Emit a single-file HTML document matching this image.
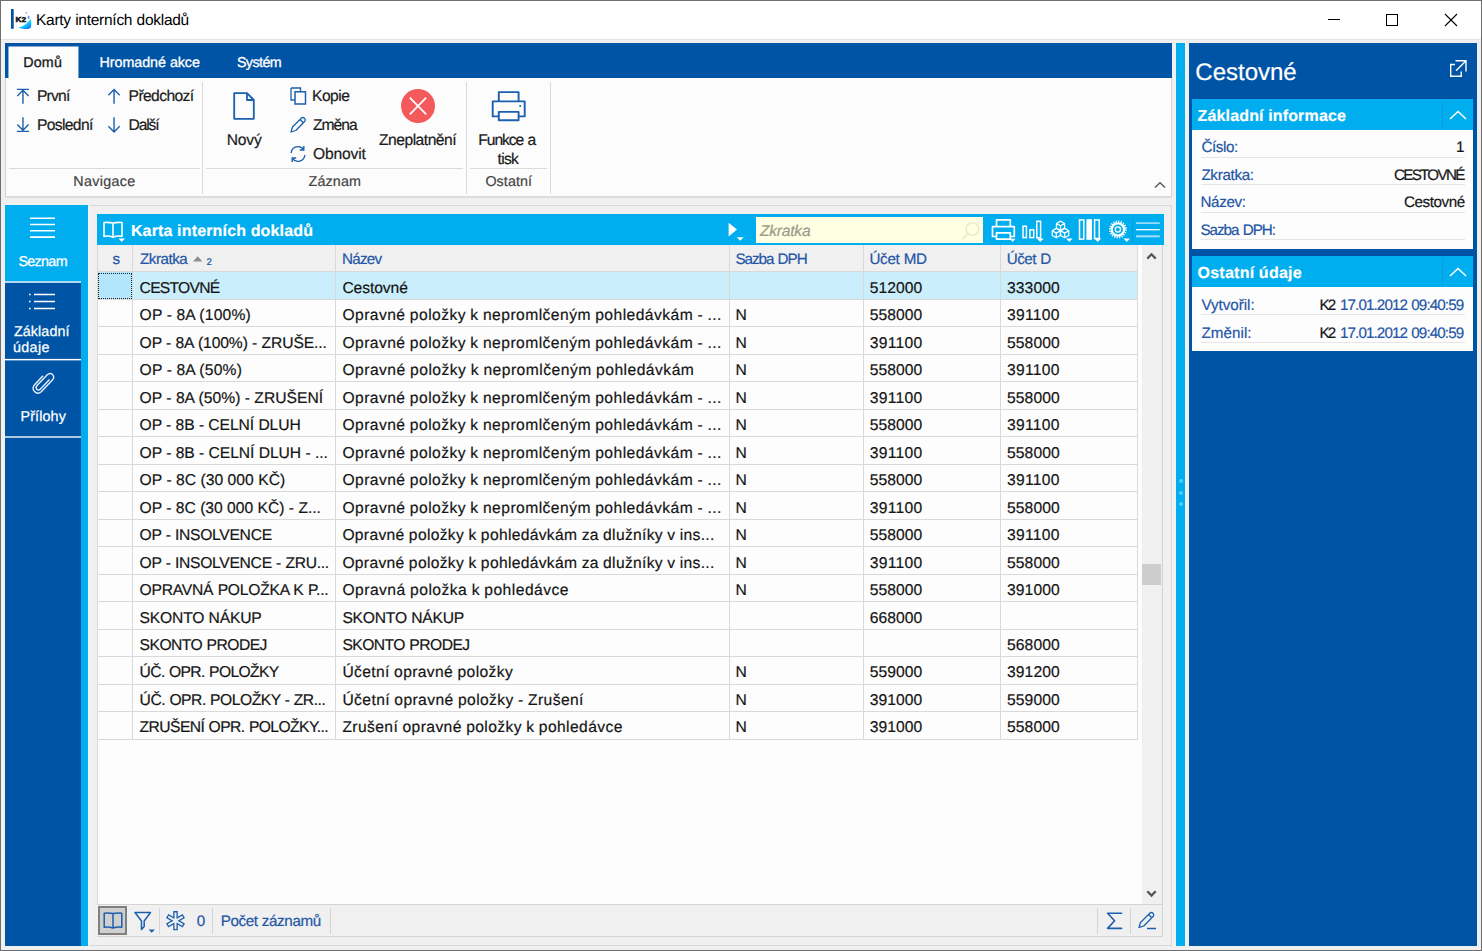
<!DOCTYPE html>
<html lang="cs">
<head>
<meta charset="utf-8">
<title>Karty interních dokladů</title>
<style>
html,body{margin:0;padding:0;}
body{width:1482px;height:951px;overflow:hidden;background:#f0f0f0;font-family:"Liberation Sans", sans-serif;position:relative;}
#app{position:absolute;left:0;top:0;width:1482px;height:951px;overflow:hidden;background:#f0f0f0;}
#app div,#app span,#app svg{position:absolute;}
#app span{white-space:pre;line-height:1;text-rendering:geometricPrecision;-webkit-text-stroke:0.2px;}
#app svg{overflow:visible;}
</style>
</head>
<body>
<div id="app">
<div style="left:0px;top:0px;width:1482px;height:951px;background:#f0f0f0;"></div>
<div style="left:1px;top:1px;width:1480px;height:38px;background:#ffffff;"></div>
<div style="left:1px;top:39px;width:1480px;height:1px;background:#e4e4e4;"></div>
<div style="left:0px;top:0px;width:1482px;height:1px;background:#6f6f6f;"></div>
<div style="left:0px;top:0px;width:1px;height:951px;background:#6f6f6f;"></div>
<div style="left:1481px;top:0px;width:1px;height:951px;background:#6f6f6f;"></div>
<div style="left:0px;top:950px;width:1482px;height:1px;background:#6f6f6f;"></div>
<header id="titlebar">
<svg style="left:11px;top:9px;" width="21" height="20" viewBox="0 0 21 20"><defs><linearGradient id="k2g" x1="0.15" y1="0.2" x2="0.85" y2="1"><stop offset="0" stop-color="#4ff5d2"/><stop offset="0.45" stop-color="#18d8fa"/><stop offset="1" stop-color="#0a6cff"/></linearGradient></defs>
<rect x="0" y="0" width="2.7" height="19.8" fill="#0054a6"/>
<path d="M7.4 18.6 Q12 17.6 14.5 15.2 Q17.6 12.4 19.4 10.2 Q20.4 10.6 20.2 16.6 Q20 19.9 17 19.9 H13 Q10 20 7.4 18.6 Z" fill="url(#k2g)"/>
<ellipse cx="17.7" cy="8.2" rx="0.9" ry="1.7" fill="#5b94ff"/>
<circle cx="15.4" cy="3.9" r="0.8" fill="#7aa8ff"/>
<circle cx="5.3" cy="17" r="0.6" fill="#b9d4ff"/>
<text x="4.6" y="12.6" font-family="Liberation Sans, sans-serif" font-size="7.6" font-weight="700" fill="#111" stroke="#111" stroke-width="0.5" textLength="10.6" lengthAdjust="spacingAndGlyphs">K2</text></svg>
<span style="top:13px;font-size:15.5px;color:#000;letter-spacing:-0.265px;word-spacing:0.265px;left:36.00px;-webkit-text-stroke:0;">Karty interních dokladů</span>
<svg style="left:1328px;top:14px;" width="12" height="12" viewBox="0 0 12 12"><path d="M0 5.5 H12" stroke="#000" stroke-width="1" fill="none"/></svg>
<svg style="left:1386px;top:14px;" width="12" height="12" viewBox="0 0 12 12"><rect x="0.5" y="0.5" width="11" height="11" stroke="#000" stroke-width="1" fill="none"/></svg>
<svg style="left:1445px;top:14px;" width="12" height="12" viewBox="0 0 12 12"><path d="M0 0 L12 12 M12 0 L0 12" stroke="#000" stroke-width="1.1" fill="none"/></svg>
</header>
<nav id="ribbon">
<div style="left:5px;top:43px;width:1167px;height:35px;background:#0054a6;"></div>
<div style="left:5px;top:78px;width:1167px;height:119px;background:#fcfcfc;box-sizing:border-box;border:1px solid #d2d2d2;border-top:none;border-bottom-color:#dcdcdc;"></div>
<div style="left:5px;top:197px;width:1167px;height:1px;background:#dedede;"></div>
<svg style="left:8px;top:46px;" width="72" height="32" viewBox="0 0 72 32"><rect x="0.45" y="0.5" width="70" height="31.5" fill="#fcfcfc"/></svg>
<span style="top:56px;font-size:14.3px;color:#1a1a1a;letter-spacing:0.133px;left:23.30px;-webkit-text-stroke:0.3px #1a1a1a;">Domů</span>
<span style="top:56px;font-size:14.3px;color:#fff;letter-spacing:-0.055px;word-spacing:0.055px;left:99.60px;-webkit-text-stroke:0.3px #fff;">Hromadné akce</span>
<span style="top:56px;font-size:14.3px;color:#fff;letter-spacing:-0.58px;left:236.90px;-webkit-text-stroke:0.3px #fff;">Systém</span>
<div style="left:202px;top:82px;width:1px;height:112px;background:#dadada;"></div>
<div style="left:466px;top:82px;width:1px;height:112px;background:#dadada;"></div>
<div style="left:550px;top:82px;width:1px;height:112px;background:#dadada;"></div>
<div style="left:9px;top:168px;width:191px;height:1px;background:#dadada;"></div>
<div style="left:206px;top:168px;width:257px;height:1px;background:#dadada;"></div>
<div style="left:470px;top:168px;width:77px;height:1px;background:#dadada;"></div>
<span style="top:175px;font-size:14.3px;color:#444;letter-spacing:0.329px;left:73.30px;">Navigace</span>
<span style="top:175px;font-size:14.3px;color:#444;letter-spacing:0.14px;left:308.60px;">Záznam</span>
<span style="top:175px;font-size:14.3px;color:#444;letter-spacing:0.1px;left:485.40px;">Ostatní</span>
<svg style="left:16px;top:88px;" width="16" height="16" viewBox="0 0 16 16"><path d="M0.9 1.4 H13 M6.95 2 V15.7 M1.3 8 L6.95 2.3 L12.6 8" stroke="#1b5fae" stroke-width="1.4" fill="none"/></svg>
<svg style="left:16px;top:117px;" width="16" height="16" viewBox="0 0 16 16"><path d="M0.9 14.4 H13 M6.95 0.2 V13.6 M1.3 7.6 L6.95 13.3 L12.6 7.6" stroke="#1b5fae" stroke-width="1.4" fill="none"/></svg>
<svg style="left:107px;top:88px;" width="16" height="16" viewBox="0 0 16 16"><path d="M7.05 1.5 V15.7 M1.4 7.2 L7.05 1.5 L12.7 7.2" stroke="#1b5fae" stroke-width="1.4" fill="none"/></svg>
<svg style="left:107px;top:117px;" width="16" height="16" viewBox="0 0 16 16"><path d="M7.05 0.2 V15 M1.4 9.3 L7.05 15 L12.7 9.3" stroke="#1b5fae" stroke-width="1.4" fill="none"/></svg>
<span style="top:89px;font-size:15.65px;color:#1a1a1a;letter-spacing:-0.75px;left:36.90px;">První</span>
<span style="top:118px;font-size:15.65px;color:#1a1a1a;letter-spacing:-0.629px;left:36.90px;">Poslední</span>
<span style="top:89px;font-size:15.65px;color:#1a1a1a;letter-spacing:-0.613px;left:128.60px;">Předchozí</span>
<span style="top:118px;font-size:15.65px;color:#1a1a1a;letter-spacing:-1.15px;left:128.60px;">Další</span>
<svg style="left:233px;top:92px;" width="22" height="28" viewBox="0 0 22 28"><path d="M1.2 1.2 H14 L20.8 8 V26.8 H1.2 Z M14 1.2 V8 H20.8" stroke="#1b5fae" stroke-width="1.8" fill="none" stroke-linejoin="round"/></svg>
<span style="top:133px;font-size:15.65px;color:#1a1a1a;letter-spacing:-0.2px;left:226.70px;">Nový</span>
<svg style="left:290px;top:87px;" width="17" height="18" viewBox="0 0 17 18"><path d="M1 1 H10.5 V4.5 M1 1 V13 H4.5" stroke="#1b5fae" stroke-width="1.3" fill="none"/><rect x="5" y="4.8" width="10.5" height="12.2" stroke="#1b5fae" stroke-width="1.5" fill="none"/></svg>
<span style="top:89px;font-size:15.65px;color:#1a1a1a;letter-spacing:-0.525px;left:312.00px;">Kopie</span>
<svg style="left:289px;top:116px;" width="18" height="18" viewBox="0 0 18 18"><path d="M2 16 L3.5 11 L12.5 2 Q14 0.8 15.5 2.3 Q17 3.8 15.8 5.3 L6.8 14.5 Z M11 3.5 L14.3 6.8" stroke="#1b5fae" stroke-width="1.3" fill="none" stroke-linejoin="round"/></svg>
<span style="top:118px;font-size:15.65px;color:#1a1a1a;letter-spacing:-1.025px;left:313.00px;">Změna</span>
<svg style="left:289px;top:145px;" width="18" height="18" viewBox="0 0 18 18"><path d="M2.2 8 A6.8 6.8 0 0 1 14.5 4.5 M15.8 10 A6.8 6.8 0 0 1 3.5 13.5" stroke="#1b5fae" stroke-width="1.4" fill="none"/><path d="M14.8 1 V5 H10.8 M3.2 17 V13 H7.2" stroke="#1b5fae" stroke-width="1.4" fill="none"/></svg>
<span style="top:147px;font-size:15.65px;color:#1a1a1a;letter-spacing:-0.183px;left:313.00px;">Obnovit</span>
<svg style="left:401px;top:89px;" width="34" height="34" viewBox="0 0 34 34"><circle cx="17" cy="17" r="17" fill="#f4595c"/><path d="M8.8 8.6 L25.2 25.4 M25.2 8.6 L8.8 25.4" stroke="#fff" stroke-width="1.7" fill="none"/></svg>
<span style="top:133px;font-size:15.65px;color:#1a1a1a;letter-spacing:-0.5px;left:379.00px;">Zneplatnění</span>
<svg style="left:490.5px;top:91px;" width="36" height="31" viewBox="0 0 36 31"><path d="M7.8 10.2 V1.1 H27.6 V10.2 M7.8 25.4 H1.7 V10.4 H33.7 V25.4 H27.6 M7.8 20.9 H27.6 V29.2 H7.8 Z" stroke="#1b5fae" stroke-width="1.9" fill="none" stroke-linejoin="round"/><circle cx="29.2" cy="15" r="1" fill="#1b5fae"/></svg>
<span style="top:133px;font-size:15.65px;color:#1a1a1a;letter-spacing:-1.067px;word-spacing:1.067px;left:478.30px;">Funkce a</span>
<span style="top:152px;font-size:15.65px;color:#1a1a1a;letter-spacing:-0.7px;left:497.50px;">tisk</span>
<svg style="left:1154px;top:181px;" width="12" height="8" viewBox="0 0 12 8"><path d="M1 6.6 L6 1.8 L11 6.6" stroke="#5a5a5a" stroke-width="1.4" fill="none"/></svg>
</nav>
<nav id="sidebar">
<div style="left:5px;top:205px;width:83px;height:741px;background:#00adef;"></div>
<div style="left:5px;top:283px;width:76px;height:663px;background:#0054a6;"></div>
<div style="left:5px;top:281px;width:76px;height:2px;background:#b2d9f2;"></div>
<div style="left:5px;top:358px;width:76px;height:3px;background:linear-gradient(to bottom,#1f62ae 0,#1f62ae 33.3%,#ffffff 33.3%,#ffffff 66.6%,#5e92c9 66.6%);"></div>
<div style="left:5px;top:436px;width:76px;height:2px;background:#adc8e4;"></div>
<svg style="left:30px;top:217px;" width="25" height="22" viewBox="0 0 25 22"><path d="M0 1.3 H25 M0 7.5 H25 M0 13.7 H25 M0 20.1 H25" stroke="#fff" stroke-width="1.6" fill="none"/></svg>
<span style="top:255px;font-size:14.3px;color:#fff;letter-spacing:-0.66px;left:18.40px;-webkit-text-stroke:0.25px #fff;">Seznam</span>
<svg style="left:29px;top:293px;" width="26" height="18" viewBox="0 0 26 18"><path d="M5 1.5 H26 M5 8.5 H26 M5 15.5 H26" stroke="#fff" stroke-width="1.6" fill="none"/><path d="M0 1.5 H1.6 M0 8.5 H1.6 M0 15.5 H1.6" stroke="#fff" stroke-width="1.6" fill="none"/></svg>
<span style="top:325px;font-size:14.3px;color:#fff;letter-spacing:0.086px;left:14.00px;-webkit-text-stroke:0.25px #fff;">Základní</span>
<span style="top:341px;font-size:14.3px;color:#fff;letter-spacing:0.35px;left:13.00px;-webkit-text-stroke:0.25px #fff;">údaje</span>
<svg style="left:32px;top:371px;" width="22" height="24" viewBox="0 0 22 24"><path d="M17.5 8.5 L8.5 18 Q6.5 20 4.8 18.2 Q3.2 16.5 5 14.5 L15 4 Q18 1 20.6 3.6 Q23 6.2 20.2 9.2 L9.5 20.5 Q5.8 24 2.5 20.6 Q-0.6 17.2 2.8 13.4 L11 4.8" stroke="#e8f0fa" stroke-width="1.4" fill="none" transform="translate(0,0)"/></svg>
<span style="top:410px;font-size:14.3px;color:#fff;letter-spacing:0.117px;left:20.60px;-webkit-text-stroke:0.25px #fff;">Přílohy</span>
</nav>
<main id="content">
<div style="left:89px;top:205px;width:1083px;height:741px;background:#f0f0f0;box-sizing:border-box;border:1px solid #d8d8d8;border-left-color:#f4f4f4;"></div>
<div style="left:97px;top:214px;width:1067px;height:31px;background:#00adef;"></div>
<div style="left:97px;top:245px;width:1066px;height:660px;background:#fdfdfd;"></div>
<div style="left:97px;top:245px;width:1px;height:660px;background:#d8d8d8;"></div>
<div style="left:97px;top:904px;width:1066px;height:1px;background:#d4d4d4;"></div>
<div style="left:1162px;top:245px;width:1px;height:692px;background:#d4d4d4;"></div>
<div style="left:98px;top:245px;width:1040px;height:26px;background:#f0f0f0;"></div>
<div style="left:1142px;top:245px;width:20px;height:659px;background:#f0f0f0;"></div>
<div style="left:1142px;top:564px;width:19px;height:21px;background:#cdcdcd;"></div>
<svg style="left:1146.3px;top:252px;" width="12" height="8" viewBox="0 0 12 8"><path d="M1.3 6.6 L5.5 2.3 L9.7 6.6" stroke="#555" stroke-width="2.3" fill="none"/></svg>
<svg style="left:1146.3px;top:890px;" width="12" height="8" viewBox="0 0 12 8"><path d="M1.3 1.2 L5.5 5.5 L9.7 1.2" stroke="#555" stroke-width="2.3" fill="none"/></svg>
<svg style="left:103px;top:221px;" width="22" height="21" viewBox="0 0 22 21"><path d="M10 2 Q6 1.1 1 1.5 V15.4 Q6 14.4 10 16.4 Q14 14.4 19 15.4 V1.5 Q14 1.1 10 2 Z M10 2 V16.4" stroke="#fff" stroke-width="1.6" fill="none" stroke-linejoin="round"/><path d="M15.5 17.5 H22 L18.7 21 Z" fill="#fff"/></svg>
<span style="top:224px;font-size:16px;color:#fff;font-weight:700;letter-spacing:0.17px;word-spacing:-0.17px;left:130.90px;">Karta interních dokladů</span>
<svg style="left:727px;top:221px;" width="18" height="20" viewBox="0 0 18 20"><path d="M1.6 1.8 L10 8.6 L1.6 15.4 Z" fill="#fff"/><path d="M9.8 16.2 H16.6 L13.2 19.8 Z" fill="#fff"/></svg>
<div style="left:756px;top:217px;width:227px;height:26px;background:#ffffe1;"></div>
<span style="top:224px;font-size:15.65px;color:#9a9a8c;font-style:italic;letter-spacing:-0.233px;left:759.90px;">Zkratka</span>
<svg style="left:961px;top:221px;" width="20" height="20" viewBox="0 0 20 20"><circle cx="11.5" cy="8" r="6.3" stroke="#e6e6cf" stroke-width="1.3" fill="none"/><path d="M7 12.5 L1.5 18" stroke="#e6e6cf" stroke-width="1.3" fill="none"/></svg>
<svg style="left:990.7px;top:218px;" width="26" height="24" viewBox="0 0 26 24"><path d="M5.5 8 V1.8 H19.3 V8 M5.5 18.5 H1.5 V8.6 H23.3 V18.5 H19.5 M5.5 14.8 H19.3 V21.2 H5.5 Z" stroke="#fff" stroke-width="1.7" fill="none" stroke-linejoin="round"/><path d="M18.6 20.8 H24.6 L21.6 24 Z" fill="#fff"/></svg>
<svg style="left:1021px;top:219px;" width="24" height="24" viewBox="0 0 24 24"><rect x="2" y="7.2" width="3.4" height="11.4" stroke="#fff" stroke-width="1.5" fill="none"/><rect x="8.9" y="10.8" width="3.8" height="7.8" stroke="#fff" stroke-width="1.5" fill="none"/><rect x="15.8" y="2.3" width="3.8" height="16.5" stroke="#fff" stroke-width="1.5" fill="none"/><path d="M15.8 19.6 H22.7 L19.25 23.1 Z" fill="#fff"/></svg>
<svg style="left:1049px;top:219px;" width="26" height="24" viewBox="0 0 26 24"><path d="M11.50 2.10 L15.57 4.45 V9.15 L11.50 11.50 L7.43 9.15 V4.45 Z M7.43 4.45 L11.50 6.80 L15.57 4.45 M11.50 6.80 V11.50 M7.30 9.40 L11.37 11.75 V16.45 L7.30 18.80 L3.23 16.45 V11.75 Z M3.23 11.75 L7.30 14.10 L11.37 11.75 M7.30 14.10 V18.80 M15.70 9.40 L19.77 11.75 V16.45 L15.70 18.80 L11.63 16.45 V11.75 Z M11.63 11.75 L15.70 14.10 L19.77 11.75 M15.70 14.10 V18.80" stroke="#fff" stroke-width="1.25" fill="none" stroke-linejoin="round"/><path d="M17 19.6 H23.6 L20.3 23.1 Z" fill="#fff"/></svg>
<svg style="left:1078px;top:219px;" width="24" height="24" viewBox="0 0 24 24"><rect x="1.5" y="0.9" width="4.3" height="19.2" stroke="#fff" stroke-width="1.5" fill="none"/><rect x="8.4" y="0.2" width="5.6" height="20.6" fill="#fff"/><rect x="16.6" y="0.9" width="4.6" height="18.6" stroke="#fff" stroke-width="1.5" fill="none"/><path d="M16.3 19.6 H23.2 L19.75 23.1 Z" fill="#fff"/></svg>
<svg style="left:1108px;top:219px;" width="24" height="24" viewBox="0 0 24 24"><circle cx="9.9" cy="10.5" r="8" stroke="#fff" stroke-width="1.9" fill="none" stroke-dasharray="1.26 1.253"/><circle cx="9.9" cy="10.5" r="6.2" stroke="#fff" stroke-width="2.3" fill="none"/><circle cx="9.9" cy="10.5" r="2.6" stroke="#fff" stroke-width="1.3" fill="none"/><path d="M15.4 19.4 H22 L18.7 23 Z" fill="#fff"/></svg>
<div style="left:1132px;top:217px;width:1px;height:26px;background:#0a9ddb;"></div>
<svg style="left:1136px;top:221px;" width="24" height="20" viewBox="0 0 24 20"><path d="M0 2.1 H23.8" stroke="#b4e5fa" stroke-width="1.5" fill="none"/><path d="M0 8.7 H23.8" stroke="#fff" stroke-width="1.3" fill="none"/><path d="M0 15.3 H23.8" stroke="#a4dff9" stroke-width="2" fill="none"/></svg>
<span style="top:252px;font-size:15.2px;color:#2456a6;left:112.60px;">s</span>
<span style="top:252px;font-size:15.2px;color:#2456a6;letter-spacing:-0.483px;left:140.00px;">Zkratka</span>
<svg style="left:193px;top:256px;" width="10" height="6" viewBox="0 0 10 6"><path d="M0 5.5 L4.7 0.3 L9.4 5.5 Z" fill="#8e8e8e"/></svg>
<span style="top:258px;font-size:9.5px;color:#2456a6;left:206.50px;">2</span>
<span style="top:252px;font-size:15.2px;color:#2456a6;letter-spacing:-0.725px;left:342.00px;">Název</span>
<span style="top:252px;font-size:15.2px;color:#2456a6;letter-spacing:-1.014px;word-spacing:1.014px;left:735.40px;">Sazba DPH</span>
<span style="top:252px;font-size:15.2px;color:#2456a6;letter-spacing:-0.28px;word-spacing:0.28px;left:869.40px;">Účet MD</span>
<span style="top:252px;font-size:15.2px;color:#2456a6;letter-spacing:-0.45px;word-spacing:0.45px;left:1006.70px;">Účet D</span>
<div style="left:98px;top:272px;width:1039px;height:27px;background:#caeefc;"></div>
<div style="left:98px;top:272px;width:34px;height:27px;background:#b3e6fc;"></div>
<div style="left:98px;top:273px;width:34px;height:26px;background:transparent;box-sizing:border-box;border:1px dotted #222;"></div>
<div style="left:98px;top:271px;width:1040px;height:1px;background:#d9d9d9;"></div>
<div style="left:98px;top:299px;width:1040px;height:1px;background:#d9d9d9;"></div>
<div style="left:98px;top:326px;width:1040px;height:1px;background:#d9d9d9;"></div>
<div style="left:98px;top:354px;width:1040px;height:1px;background:#d9d9d9;"></div>
<div style="left:98px;top:381px;width:1040px;height:1px;background:#d9d9d9;"></div>
<div style="left:98px;top:409px;width:1040px;height:1px;background:#d9d9d9;"></div>
<div style="left:98px;top:436px;width:1040px;height:1px;background:#d9d9d9;"></div>
<div style="left:98px;top:464px;width:1040px;height:1px;background:#d9d9d9;"></div>
<div style="left:98px;top:491px;width:1040px;height:1px;background:#d9d9d9;"></div>
<div style="left:98px;top:519px;width:1040px;height:1px;background:#d9d9d9;"></div>
<div style="left:98px;top:546px;width:1040px;height:1px;background:#d9d9d9;"></div>
<div style="left:98px;top:574px;width:1040px;height:1px;background:#d9d9d9;"></div>
<div style="left:98px;top:601px;width:1040px;height:1px;background:#d9d9d9;"></div>
<div style="left:98px;top:629px;width:1040px;height:1px;background:#d9d9d9;"></div>
<div style="left:98px;top:656px;width:1040px;height:1px;background:#d9d9d9;"></div>
<div style="left:98px;top:684px;width:1040px;height:1px;background:#d9d9d9;"></div>
<div style="left:98px;top:711px;width:1040px;height:1px;background:#d9d9d9;"></div>
<div style="left:98px;top:739px;width:1040px;height:1px;background:#d9d9d9;"></div>
<div style="left:132px;top:245px;width:1px;height:495px;background:#d9d9d9;"></div>
<div style="left:335px;top:245px;width:1px;height:495px;background:#d9d9d9;"></div>
<div style="left:729px;top:245px;width:1px;height:495px;background:#d9d9d9;"></div>
<div style="left:863px;top:245px;width:1px;height:495px;background:#d9d9d9;"></div>
<div style="left:1000px;top:245px;width:1px;height:495px;background:#d9d9d9;"></div>
<div style="left:1137px;top:245px;width:1px;height:495px;background:#d9d9d9;"></div>
<span style="top:281px;font-size:15.65px;color:#151515;letter-spacing:-0.729px;left:139.60px;">CESTOVNÉ</span>
<span style="top:281px;font-size:15.65px;color:#151515;letter-spacing:-0.086px;left:342.40px;">Cestovné</span>
<span style="top:281px;font-size:15.65px;color:#151515;letter-spacing:0.08px;left:869.70px;">512000</span>
<span style="top:281px;font-size:15.65px;color:#151515;letter-spacing:0.1px;left:1007.00px;">333000</span>
<span style="top:308px;font-size:15.65px;color:#151515;letter-spacing:0.19px;word-spacing:-0.19px;left:139.60px;">OP - 8A (100%)</span>
<span style="top:308px;font-size:15.65px;color:#151515;letter-spacing:0.446px;word-spacing:-0.446px;left:342.40px;">Opravné položky k nepromlčeným pohledávkám - ...</span>
<span style="top:308px;font-size:15.65px;color:#151515;letter-spacing:2.7px;left:735.60px;">N</span>
<span style="top:308px;font-size:15.65px;color:#151515;letter-spacing:0.08px;left:869.70px;">558000</span>
<span style="top:308px;font-size:15.65px;color:#151515;letter-spacing:0.3px;left:1007.00px;">391100</span>
<span style="top:336px;font-size:15.65px;color:#151515;letter-spacing:-0.1px;word-spacing:0.1px;left:139.60px;">OP - 8A (100%) - ZRUŠE...</span>
<span style="top:336px;font-size:15.65px;color:#151515;letter-spacing:0.446px;word-spacing:-0.446px;left:342.40px;">Opravné položky k nepromlčeným pohledávkám - ...</span>
<span style="top:336px;font-size:15.65px;color:#151515;letter-spacing:2.7px;left:735.60px;">N</span>
<span style="top:336px;font-size:15.65px;color:#151515;letter-spacing:0.28px;left:869.70px;">391100</span>
<span style="top:336px;font-size:15.65px;color:#151515;letter-spacing:0.1px;left:1007.00px;">558000</span>
<span style="top:363px;font-size:15.65px;color:#151515;letter-spacing:0.189px;word-spacing:-0.189px;left:139.60px;">OP - 8A (50%)</span>
<span style="top:363px;font-size:15.65px;color:#151515;letter-spacing:0.476px;word-spacing:-0.476px;left:342.40px;">Opravné položky k nepromlčeným pohledávkám</span>
<span style="top:363px;font-size:15.65px;color:#151515;letter-spacing:2.7px;left:735.60px;">N</span>
<span style="top:363px;font-size:15.65px;color:#151515;letter-spacing:0.08px;left:869.70px;">558000</span>
<span style="top:363px;font-size:15.65px;color:#151515;letter-spacing:0.3px;left:1007.00px;">391100</span>
<span style="top:391px;font-size:15.65px;color:#151515;letter-spacing:0.024px;word-spacing:-0.024px;left:139.60px;">OP - 8A (50%) - ZRUŠENÍ</span>
<span style="top:391px;font-size:15.65px;color:#151515;letter-spacing:0.446px;word-spacing:-0.446px;left:342.40px;">Opravné položky k nepromlčeným pohledávkám - ...</span>
<span style="top:391px;font-size:15.65px;color:#151515;letter-spacing:2.7px;left:735.60px;">N</span>
<span style="top:391px;font-size:15.65px;color:#151515;letter-spacing:0.28px;left:869.70px;">391100</span>
<span style="top:391px;font-size:15.65px;color:#151515;letter-spacing:0.1px;left:1007.00px;">558000</span>
<span style="top:418px;font-size:15.65px;color:#151515;letter-spacing:-0.079px;word-spacing:0.079px;left:139.60px;">OP - 8B - CELNÍ DLUH</span>
<span style="top:418px;font-size:15.65px;color:#151515;letter-spacing:0.446px;word-spacing:-0.446px;left:342.40px;">Opravné položky k nepromlčeným pohledávkám - ...</span>
<span style="top:418px;font-size:15.65px;color:#151515;letter-spacing:2.7px;left:735.60px;">N</span>
<span style="top:418px;font-size:15.65px;color:#151515;letter-spacing:0.08px;left:869.70px;">558000</span>
<span style="top:418px;font-size:15.65px;color:#151515;letter-spacing:0.3px;left:1007.00px;">391100</span>
<span style="top:446px;font-size:15.65px;color:#151515;letter-spacing:-0.05px;word-spacing:0.05px;left:139.60px;">OP - 8B - CELNÍ DLUH - ...</span>
<span style="top:446px;font-size:15.65px;color:#151515;letter-spacing:0.446px;word-spacing:-0.446px;left:342.40px;">Opravné položky k nepromlčeným pohledávkám - ...</span>
<span style="top:446px;font-size:15.65px;color:#151515;letter-spacing:2.7px;left:735.60px;">N</span>
<span style="top:446px;font-size:15.65px;color:#151515;letter-spacing:0.28px;left:869.70px;">391100</span>
<span style="top:446px;font-size:15.65px;color:#151515;letter-spacing:0.1px;left:1007.00px;">558000</span>
<span style="top:473px;font-size:15.65px;color:#151515;letter-spacing:0.062px;word-spacing:-0.062px;left:139.60px;">OP - 8C (30 000 KČ)</span>
<span style="top:473px;font-size:15.65px;color:#151515;letter-spacing:0.446px;word-spacing:-0.446px;left:342.40px;">Opravné položky k nepromlčeným pohledávkám - ...</span>
<span style="top:473px;font-size:15.65px;color:#151515;letter-spacing:2.7px;left:735.60px;">N</span>
<span style="top:473px;font-size:15.65px;color:#151515;letter-spacing:0.08px;left:869.70px;">558000</span>
<span style="top:473px;font-size:15.65px;color:#151515;letter-spacing:0.3px;left:1007.00px;">391100</span>
<span style="top:501px;font-size:15.65px;color:#151515;left:139.60px;">OP - 8C (30 000 KČ) - Z...</span>
<span style="top:501px;font-size:15.65px;color:#151515;letter-spacing:0.446px;word-spacing:-0.446px;left:342.40px;">Opravné položky k nepromlčeným pohledávkám - ...</span>
<span style="top:501px;font-size:15.65px;color:#151515;letter-spacing:2.7px;left:735.60px;">N</span>
<span style="top:501px;font-size:15.65px;color:#151515;letter-spacing:0.28px;left:869.70px;">391100</span>
<span style="top:501px;font-size:15.65px;color:#151515;letter-spacing:0.1px;left:1007.00px;">558000</span>
<span style="top:528px;font-size:15.65px;color:#151515;letter-spacing:-0.283px;word-spacing:0.283px;left:139.60px;">OP - INSOLVENCE</span>
<span style="top:528px;font-size:15.65px;color:#151515;letter-spacing:0.307px;word-spacing:-0.307px;left:342.40px;">Opravné položky k pohledávkám za dlužníky v ins...</span>
<span style="top:528px;font-size:15.65px;color:#151515;letter-spacing:2.7px;left:735.60px;">N</span>
<span style="top:528px;font-size:15.65px;color:#151515;letter-spacing:0.08px;left:869.70px;">558000</span>
<span style="top:528px;font-size:15.65px;color:#151515;letter-spacing:0.3px;left:1007.00px;">391100</span>
<span style="top:556px;font-size:15.65px;color:#151515;letter-spacing:-0.284px;word-spacing:0.284px;left:139.60px;">OP - INSOLVENCE - ZRU...</span>
<span style="top:556px;font-size:15.65px;color:#151515;letter-spacing:0.307px;word-spacing:-0.307px;left:342.40px;">Opravné položky k pohledávkám za dlužníky v ins...</span>
<span style="top:556px;font-size:15.65px;color:#151515;letter-spacing:2.7px;left:735.60px;">N</span>
<span style="top:556px;font-size:15.65px;color:#151515;letter-spacing:0.28px;left:869.70px;">391100</span>
<span style="top:556px;font-size:15.65px;color:#151515;letter-spacing:0.1px;left:1007.00px;">558000</span>
<span style="top:583px;font-size:15.65px;color:#151515;letter-spacing:-0.233px;word-spacing:0.233px;left:139.60px;">OPRAVNÁ POLOŽKA K P...</span>
<span style="top:583px;font-size:15.65px;color:#151515;letter-spacing:0.475px;word-spacing:-0.475px;left:342.40px;">Opravná položka k pohledávce</span>
<span style="top:583px;font-size:15.65px;color:#151515;letter-spacing:2.7px;left:735.60px;">N</span>
<span style="top:583px;font-size:15.65px;color:#151515;letter-spacing:0.08px;left:869.70px;">558000</span>
<span style="top:583px;font-size:15.65px;color:#151515;letter-spacing:0.1px;left:1007.00px;">391000</span>
<span style="top:611px;font-size:15.65px;color:#151515;letter-spacing:-0.19px;word-spacing:0.19px;left:139.60px;">SKONTO NÁKUP</span>
<span style="top:611px;font-size:15.65px;color:#151515;letter-spacing:-0.22px;word-spacing:0.22px;left:342.40px;">SKONTO NÁKUP</span>
<span style="top:611px;font-size:15.65px;color:#151515;letter-spacing:0.08px;left:869.70px;">668000</span>
<span style="top:638px;font-size:15.65px;color:#151515;letter-spacing:-0.518px;word-spacing:0.518px;left:139.60px;">SKONTO PRODEJ</span>
<span style="top:638px;font-size:15.65px;color:#151515;letter-spacing:-0.527px;word-spacing:0.527px;left:342.40px;">SKONTO PRODEJ</span>
<span style="top:638px;font-size:15.65px;color:#151515;letter-spacing:0.1px;left:1007.00px;">568000</span>
<span style="top:665px;font-size:15.65px;color:#151515;letter-spacing:-0.623px;word-spacing:0.623px;left:139.60px;">ÚČ. OPR. POLOŽKY</span>
<span style="top:665px;font-size:15.65px;color:#151515;letter-spacing:0.363px;word-spacing:-0.363px;left:342.40px;">Účetní opravné položky</span>
<span style="top:665px;font-size:15.65px;color:#151515;letter-spacing:2.7px;left:735.60px;">N</span>
<span style="top:665px;font-size:15.65px;color:#151515;letter-spacing:0.08px;left:869.70px;">559000</span>
<span style="top:665px;font-size:15.65px;color:#151515;letter-spacing:0.1px;left:1007.00px;">391200</span>
<span style="top:693px;font-size:15.65px;color:#151515;letter-spacing:-0.479px;word-spacing:0.479px;left:139.60px;">ÚČ. OPR. POLOŽKY - ZR...</span>
<span style="top:693px;font-size:15.65px;color:#151515;letter-spacing:0.396px;word-spacing:-0.396px;left:342.40px;">Účetní opravné položky - Zrušení</span>
<span style="top:693px;font-size:15.65px;color:#151515;letter-spacing:2.7px;left:735.60px;">N</span>
<span style="top:693px;font-size:15.65px;color:#151515;letter-spacing:0.08px;left:869.70px;">391000</span>
<span style="top:693px;font-size:15.65px;color:#151515;letter-spacing:0.1px;left:1007.00px;">559000</span>
<span style="top:720px;font-size:15.65px;color:#151515;letter-spacing:-0.57px;word-spacing:0.57px;left:139.60px;">ZRUŠENÍ OPR. POLOŽKY...</span>
<span style="top:720px;font-size:15.65px;color:#151515;letter-spacing:0.394px;word-spacing:-0.394px;left:342.40px;">Zrušení opravné položky k pohledávce</span>
<span style="top:720px;font-size:15.65px;color:#151515;letter-spacing:2.7px;left:735.60px;">N</span>
<span style="top:720px;font-size:15.65px;color:#151515;letter-spacing:0.08px;left:869.70px;">391000</span>
<span style="top:720px;font-size:15.65px;color:#151515;letter-spacing:0.1px;left:1007.00px;">558000</span>
<footer id="statusbar">
<div style="left:98px;top:905px;width:1064px;height:32px;background:#f0f0f0;"></div>
<div style="left:97px;top:936px;width:1066px;height:1px;background:#d4d4d4;"></div>
<div style="left:98px;top:906px;width:29px;height:29px;background:#cfcfcf;box-sizing:border-box;border:2px solid #808080;"></div>
<svg style="left:103px;top:912px;" width="20" height="17" viewBox="0 0 20 17"><path d="M10 1.6 Q6 0.6 1.2 1.3 V15.2 Q6 14.6 10 16 Q14 14.6 18.8 15.2 V1.3 Q14 0.6 10 1.6 Z M10 1.6 V16" stroke="#1b5fae" stroke-width="1.5" fill="none" stroke-linejoin="round"/></svg>
<svg style="left:134px;top:911px;" width="22" height="22" viewBox="0 0 22 22"><path d="M1 1.5 H16.5 L10.2 10 V15.5 L7.5 18.5 V10 Z" stroke="#1b5fae" stroke-width="1.5" fill="none" stroke-linejoin="round"/><path d="M14.5 18.5 H21 L17.7 21.8 Z" fill="#1b5fae"/></svg>
<div style="left:159px;top:908px;width:1px;height:26px;background:#d4d4d4;"></div>
<svg style="left:165px;top:911px;" width="21" height="21" viewBox="0 0 21 21"><path d="M10.50 0.10 L10.50 19.30 M2.19 4.90 L18.81 14.50 M18.81 4.90 L2.19 14.50" stroke="#1b5fae" stroke-width="4.6" fill="none"/><path d="M10.50 1.40 L10.50 18.00 M3.31 5.55 L17.69 13.85 M17.69 5.55 L3.31 13.85" stroke="#f0f0f0" stroke-width="2" fill="none"/></svg>
<span style="top:914px;font-size:15.2px;color:#2456a6;left:196.70px;">0</span>
<div style="left:212px;top:908px;width:1px;height:26px;background:#d4d4d4;"></div>
<span style="top:914px;font-size:15.2px;color:#2456a6;letter-spacing:-0.382px;word-spacing:0.382px;left:220.70px;">Počet záznamů</span>
<div style="left:330px;top:908px;width:1px;height:26px;background:#d4d4d4;"></div>
<div style="left:1097px;top:908px;width:1px;height:26px;background:#d4d4d4;"></div>
<div style="left:1130px;top:908px;width:1px;height:26px;background:#d4d4d4;"></div>
<svg style="left:1106px;top:911px;" width="18" height="20" viewBox="0 0 18 20"><path d="M15.6 2.3 H1.6 L8.6 9.8 L1.6 17.4 H15.6" stroke="#1b5fae" stroke-width="1.6" fill="none" stroke-linejoin="round" stroke-linecap="round"/></svg>
<svg style="left:1137px;top:910.3px;" width="20" height="20" viewBox="0 0 20 20"><path d="M2 17.5 L3.5 12.5 L13 3 Q14.5 1.8 16 3.3 Q17.5 4.8 16.3 6.3 L7 15.8 Z M11.5 4.5 L14.8 7.8 M10 18.5 H19" stroke="#1b5fae" stroke-width="1.3" fill="none" stroke-linejoin="round"/></svg>
</footer>
</main>
<aside id="detail">
<div style="left:1176px;top:43px;width:9px;height:903px;background:#00adef;"></div>
<div style="left:1185px;top:43px;width:4px;height:903px;background:#f3f1f0;"></div>
<div style="left:1189px;top:43px;width:288px;height:903px;background:#0054a6;"></div>
<div style="left:1178.5px;top:479.3px;width:4px;height:4px;background:#4dcfff;border-radius:2px;"></div>
<div style="left:1178.5px;top:490.6px;width:4px;height:4px;background:#4dcfff;border-radius:2px;"></div>
<div style="left:1178.5px;top:501.7px;width:4px;height:4px;background:#4dcfff;border-radius:2px;"></div>
<span style="top:61px;font-size:24px;color:#fff;left:1195.30px;">Cestovné</span>
<svg style="left:1450px;top:60px;" width="17" height="17" viewBox="0 0 17 17"><path d="M5 4.5 H0.7 V16.2 H11.2 V11.5 M5.5 0.8 H16 V11.5 M16 0.8 L6 10.8" stroke="#fff" stroke-width="1.4" fill="none"/></svg>
<div style="left:1192px;top:99px;width:281px;height:31px;background:#00adef;"></div>
<span style="top:109px;font-size:16px;color:#fff;font-weight:700;letter-spacing:0.162px;word-spacing:-0.162px;left:1197.50px;">Základní informace</span>
<div style="left:1442px;top:101px;width:1px;height:27px;background:#0a9ddb;"></div>
<svg style="left:1449px;top:110px;" width="18" height="10" viewBox="0 0 18 10"><path d="M1 9 L9 1.5 L17 9" stroke="#fff" stroke-width="1.5" fill="none"/></svg>
<div style="left:1192px;top:130px;width:281px;height:119px;background:#fdfdfd;"></div>
<span style="top:140px;font-size:15.2px;color:#2456a6;letter-spacing:-0.4px;left:1201.40px;">Číslo:</span>
<div style="left:1201px;top:157px;width:264px;height:1px;background:#e6e6e6;"></div>
<span style="top:140px;font-size:15.2px;color:#151515;left:1456.00px;">1</span>
<span style="top:168px;font-size:15.2px;color:#2456a6;letter-spacing:-0.314px;left:1201.40px;">Zkratka:</span>
<div style="left:1201px;top:184px;width:264px;height:1px;background:#e6e6e6;"></div>
<span style="top:168px;font-size:15.2px;color:#151515;letter-spacing:-1.714px;left:1394.00px;">CESTOVNÉ</span>
<span style="top:195px;font-size:15.2px;color:#2456a6;letter-spacing:-0.32px;left:1200.40px;">Název:</span>
<div style="left:1201px;top:212px;width:264px;height:1px;background:#e6e6e6;"></div>
<span style="top:195px;font-size:15.2px;color:#151515;letter-spacing:-0.429px;left:1404.00px;">Cestovné</span>
<span style="top:223px;font-size:15.2px;color:#2456a6;letter-spacing:-1.0px;word-spacing:1.0px;left:1200.40px;">Sazba DPH:</span>
<div style="left:1201px;top:239px;width:264px;height:1px;background:#e6e6e6;"></div>
<div style="left:1192px;top:256px;width:281px;height:31px;background:#00adef;"></div>
<span style="top:266px;font-size:16px;color:#fff;font-weight:700;letter-spacing:0.255px;word-spacing:-0.255px;left:1197.50px;">Ostatní údaje</span>
<div style="left:1442px;top:258px;width:1px;height:27px;background:#0a9ddb;"></div>
<svg style="left:1449px;top:267px;" width="18" height="10" viewBox="0 0 18 10"><path d="M1 9 L9 1.5 L17 9" stroke="#fff" stroke-width="1.5" fill="none"/></svg>
<div style="left:1192px;top:287px;width:281px;height:64px;background:#fdfdfd;"></div>
<span style="top:298px;font-size:15.2px;color:#2456a6;letter-spacing:-0.025px;left:1201.40px;">Vytvořil:</span>
<div style="left:1201px;top:314px;width:264px;height:1px;background:#e6e6e6;"></div>
<span style="top:298px;font-size:15.2px;color:#2456a6;letter-spacing:-0.894px;word-spacing:0.894px;left:1340.00px;">17.01.2012 09:40:59</span>
<span style="top:298px;font-size:15.2px;color:#151515;letter-spacing:-1.9px;left:1319.50px;">K2</span>
<span style="top:326px;font-size:15.2px;color:#2456a6;letter-spacing:0.067px;left:1201.40px;">Změnil:</span>
<div style="left:1201px;top:342px;width:264px;height:1px;background:#e6e6e6;"></div>
<span style="top:326px;font-size:15.2px;color:#2456a6;letter-spacing:-0.894px;word-spacing:0.894px;left:1340.00px;">17.01.2012 09:40:59</span>
<span style="top:326px;font-size:15.2px;color:#151515;letter-spacing:-1.9px;left:1319.50px;">K2</span>
</aside>
</div>
</body>
</html>
